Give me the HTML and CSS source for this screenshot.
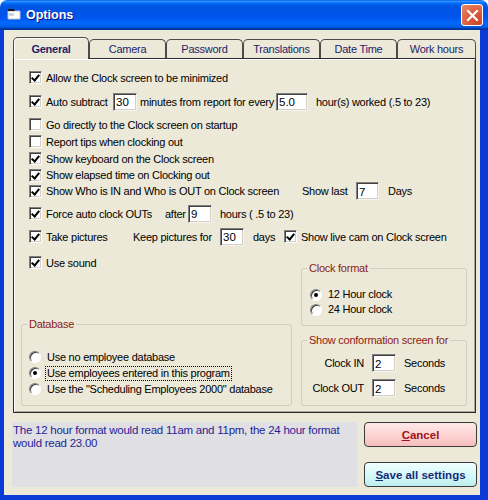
FILE: index.html
```html
<!DOCTYPE html>
<html lang="en">
<head>
    <meta charset="UTF-8">
    <title>Options</title>
    <link rel="stylesheet" href="styles.css">
</head>
<body>
    <div class="window">
        <div class="titlebar">
            <svg class="app-icon" width="14" height="12" viewBox="0 0 14 12">
                <path d="M1 3h12v8H1z" fill="#fff" stroke="#b8c4d8"/>
                <path d="M1 1h6l1 2H1z" fill="#1b1b1b"/>
                <path d="M2 5h5v3H2z" fill="#c9d3e4"/>
            </svg>
            <span class="title">Options</span>
            <div class="close-btn">
                <svg width="19" height="19" viewBox="0 0 19 19">
                    <path d="M5 5l9 9M14 5l-9 9" stroke="#fff" stroke-width="2.2" stroke-linecap="square"/>
                </svg>
            </div>
        </div>

        <div class="client">
            <div class="tabs">
                <div class="tab active">General</div>
                <div class="tab">Camera</div>
                <div class="tab">Password</div>
                <div class="tab">Translations</div>
                <div class="tab">Date Time</div>
                <div class="tab wide">Work hours</div>
            </div>

            <div class="panel">
                <div class="row">
                    <span class="check on"></span>
                    <span>Allow the Clock screen to be minimized</span>
                </div>
                <div class="row mt7">
                    <span class="check on"></span>
                    <span class="lbl lbl-auto">Auto subtract</span>
                    <input class="num" type="text" value="30">
                    <span class="lbl lbl-minutes">minutes from report for every</span>
                    <input class="num num-wide" type="text" value="5.0">
                    <span class="lbl pad8">hour(s) worked (.5 to 23)</span>
                </div>
                <div class="row mt6">
                    <span class="check"></span>
                    <span>Go directly to the Clock screen on startup</span>
                </div>
                <div class="row">
                    <span class="check"></span>
                    <span>Report tips when clocking out</span>
                </div>
                <div class="row">
                    <span class="check on"></span>
                    <span>Show keyboard on the Clock screen</span>
                </div>
                <div class="row short">
                    <span class="check on"></span>
                    <span>Show elapsed time on Clocking out</span>
                </div>
                <div class="row short">
                    <span class="check on"></span>
                    <span class="lbl lbl-who">Show Who is IN and Who is OUT on Clock screen</span>
                    <span class="lbl lbl-last">Show last</span>
                    <input class="num num-small" type="text" value="7">
                    <span class="lbl pad9">Days</span>
                </div>
                <div class="row mt6">
                    <span class="check on"></span>
                    <span class="lbl lbl-force">Force auto clock OUTs</span>
                    <span class="lbl lbl-after">after</span>
                    <input class="num" type="text" value="9">
                    <span class="lbl pad8">hours ( .5 to 23)</span>
                </div>
                <div class="row mt6">
                    <span class="check on"></span>
                    <span class="lbl lbl-take">Take pictures</span>
                    <span class="lbl lbl-keep">Keep pictures for</span>
                    <input class="num" type="text" value="30">
                    <span class="lbl lbl-days">days</span>
                    <span class="check on"></span>
                    <span>Show live cam on Clock screen</span>
                </div>

                <div class="lower">
                    <div class="lower-left">
                        <div class="row mt9">
                            <span class="check on"></span>
                            <span>Use sound</span>
                        </div>
                        <fieldset class="group database">
                            <legend>Database</legend>
                            <div class="opt">
                                <span class="radio"></span>
                                <span class="opt-text">Use no employee database</span>
                            </div>
                            <div class="opt">
                                <span class="radio on"></span>
                                <span class="opt-text focused">Use employees entered in this program</span>
                            </div>
                            <div class="opt">
                                <span class="radio"></span>
                                <span class="opt-text">Use the "Scheduling Employees 2000" database</span>
                            </div>
                        </fieldset>
                    </div>

                    <div class="lower-right">
                        <fieldset class="group clock-format">
                            <legend>Clock format</legend>
                            <div class="opt">
                                <span class="radio on"></span>
                                <span class="opt-text">12 Hour clock</span>
                            </div>
                            <div class="opt">
                                <span class="radio"></span>
                                <span class="opt-text">24 Hour clock</span>
                            </div>
                        </fieldset>
                        <fieldset class="group confirm">
                            <legend>Show conformation screen for</legend>
                            <div class="sec-row">
                                <span class="sec-label">Clock IN</span>
                                <input class="num" type="text" value="2">
                                <span class="sec-unit">Seconds</span>
                            </div>
                            <div class="sec-row">
                                <span class="sec-label">Clock OUT</span>
                                <input class="num" type="text" value="2">
                                <span class="sec-unit">Seconds</span>
                            </div>
                        </fieldset>
                    </div>
                </div>
            </div>

            <div class="footer">
                <div class="info">The 12 hour format would read 11am and 11pm, the 24 hour format would read 23.00</div>
                <div class="actions">
                    <button class="btn btn-cancel"><u>C</u>ancel</button>
                    <button class="btn btn-save"><u>S</u>ave all settings</button>
                </div>
            </div>
        </div>
    </div>
</body>
</html>
```

FILE: styles.css
```css
body {
    margin: 0;
    background: #fff;
    font-family: "Liberation Sans", Arial, sans-serif;
    font-size: 11px;
    letter-spacing: -0.25px;
    color: #000;
}
.window {
    width: 488px;
    height: 500px;
    display: flex;
    flex-direction: column;
}

/* title bar */
.titlebar {
    height: 30px;
    box-sizing: border-box;
    display: flex;
    align-items: center;
    padding: 0 5px 0 7px;
    border-radius: 7px 7px 0 0;
    background: linear-gradient(to bottom, #0058ee 0%, #3593ff 4%, #288eff 6%, #127dff 8%, #036ffc 10%, #0262ee 14%, #0057e5 20%, #0054e3 24%, #0055eb 56%, #005bf5 66%, #026afe 76%, #0062ef 86%, #0052d6 92%, #0040ab 94%, #003092 100%);
}
.app-icon {
    margin: 0 5px 2px 0;
}
.title {
    flex: 1;
    color: #fff;
    font-size: 12.5px;
    font-weight: bold;
    letter-spacing: 0;
    text-shadow: 1px 1px #0f1089;
}
.close-btn {
    width: 22px;
    height: 22px;
    box-sizing: border-box;
    display: flex;
    align-items: center;
    justify-content: center;
    border: 1px solid #fff;
    border-radius: 3px;
    background: radial-gradient(circle at 80% 85%, #cc4627 0%, #dd6445 55%, #e88b6f 100%);
}

/* client area */
.client {
    flex: 1;
    display: flex;
    flex-direction: column;
    background: #ece9d8;
    border-style: solid;
    border-color: #0a3bd6;
    border-width: 0 8px 5px 4px;
}
.tabs {
    display: flex;
    align-items: flex-end;
    height: 21px;
    margin: 7px 0 0 9px;
    position: relative;
    z-index: 1;
}
.tab {
    width: 77px;
    height: 19px;
    box-sizing: border-box;
    border: 1px solid #4b4b4b;
    border-bottom: none;
    border-radius: 5px 5px 0 0;
    text-align: center;
    line-height: 18px;
    color: #1c2468;
    background: #ece9d8;
}
.tab.active {
    width: 76px;
    height: 22px;
    margin-bottom: -1px;
    line-height: 22px;
    font-weight: bold;
    box-shadow: inset 1px 1px #fff;
}
.tab.wide {
    width: 79px;
}

.panel {
    width: 463px;
    height: 355px;
    box-sizing: border-box;
    margin-left: 9px;
    padding: 10px 8px 6px 7px;
    border: 1px solid #2b2b2b;
    box-shadow: inset 1px 1px #fff, inset -1px -1px #aca899;
    display: flex;
    flex-direction: column;
}

.row {
    display: flex;
    align-items: center;
    height: 17px;
    padding-left: 8px;
    white-space: nowrap;
}
.row.short { height: 16px; }
.mt6 { margin-top: 6px; }
.mt7 { margin-top: 7px; }
.mt9 { margin-top: 9px; }

.lbl {
    display: inline-block;
    box-sizing: border-box;
}
.lbl-auto { width: 67px; }
.lbl-minutes { width: 139px; padding-left: 3px; }
.lbl-who { width: 256px; }
.lbl-last { width: 54px; }
.lbl-force { width: 119px; }
.lbl-after { width: 23px; }
.lbl-take { width: 87px; }
.lbl-keep { width: 87px; }
.lbl-days { width: 40px; padding-left: 9px; }
.pad8 { padding-left: 8px; }
.pad9 { padding-left: 9px; }

/* sunken checkbox */
.check {
    position: relative;
    flex: none;
    width: 13px;
    height: 13px;
    box-sizing: border-box;
    margin-right: 4px;
    background: #fff;
    border: 1px solid;
    border-color: #808080 #fff #fff #808080;
    box-shadow: inset 1px 1px #404040, inset -1px -1px #d4d0c8;
}
.check.on::after {
    content: "";
    position: absolute;
    left: 3px;
    top: 1px;
    width: 3px;
    height: 6px;
    border: solid #000;
    border-width: 0 2px 2px 0;
    transform: rotate(40deg);
}

.num {
    width: 24px;
    height: 18px;
    box-sizing: border-box;
    margin: 0;
    padding: 1px 2px 0;
    font-family: inherit;
    font-size: 11.5px;
    letter-spacing: 0;
    color: #000;
    background: #fff;
    border: 1px solid;
    border-color: #808080 #f4f3ee #f4f3ee #808080;
    box-shadow: inset 1px 1px #404040, inset -1px -1px #d4d0c8;
    outline: none;
}
.num-wide { width: 32px; }
.num-small { width: 23px; }

/* lower part: groups */
.lower {
    flex: 1;
    display: flex;
    gap: 9px;
}
.lower-left {
    width: 271px;
    display: flex;
    flex-direction: column;
    justify-content: space-between;
}
.lower-right {
    width: 166px;
    display: flex;
    flex-direction: column;
}
.group {
    margin: 0;
    padding: 0 4px 0 7px;
    min-width: 0;
    border: 1px solid #d0d0bf;
    border-radius: 3px;
}
.group legend {
    padding: 0 2px;
    margin-left: -2px;
    line-height: 13px;
    color: #8c1c13;
}
.database {
    height: 88px;
    box-sizing: border-box;
    padding-top: 18px;
}
.clock-format {
    height: 64px;
    box-sizing: border-box;
    margin-top: 17px;
    padding-top: 12px;
}
.confirm {
    height: 72px;
    box-sizing: border-box;
    margin-top: 8px;
    padding-top: 6px;
}

.opt {
    display: flex;
    align-items: center;
    height: 16px;
    white-space: nowrap;
}
.clock-format .opt {
    height: 15px;
    padding-left: 1px;
}
.radio {
    flex: none;
    width: 12px;
    height: 12px;
    box-sizing: border-box;
    margin-right: 4px;
    display: flex;
    align-items: center;
    justify-content: center;
    border-radius: 50%;
    background: #fff;
    border: 1px solid;
    border-color: #808080 #fff #fff #808080;
    box-shadow: inset 1px 1px #404040;
}
.radio.on::after {
    content: "";
    width: 4px;
    height: 4px;
    border-radius: 50%;
    background: #000;
}
.opt-text {
    padding: 0 1px;
    border: 1px dotted transparent;
    line-height: 13px;
}
.opt-text.focused {
    border-color: #000;
}

.sec-row {
    display: flex;
    align-items: center;
    height: 20px;
}
.sec-row + .sec-row {
    margin-top: 5px;
}
.sec-label {
    width: 55px;
    text-align: right;
}
.sec-row .num {
    margin-left: 8px;
}
.sec-unit {
    margin-left: 8px;
}

/* footer */
.footer {
    display: flex;
    margin: 9px 0 0 8px;
    gap: 7px;
}
.info {
    width: 345px;
    height: 65px;
    box-sizing: border-box;
    padding: 2px 1px;
    background: #e0dfe3;
    color: #1f1f95;
    font-size: 11.5px;
    line-height: 13px;
}
.actions {
    display: flex;
    flex-direction: column;
    gap: 15px;
}
.btn {
    width: 113px;
    height: 25px;
    padding: 0;
    font-family: inherit;
    font-size: 11.5px;
    font-weight: bold;
    letter-spacing: 0;
    border: 1px solid #3c3c3c;
    border-radius: 4px;
}
.btn-cancel {
    color: #9c1414;
    background: linear-gradient(to bottom, #ffe8e8, #fdd0d0 60%, #f4bcbc);
}
.btn-save {
    color: #1a2a78;
    background: linear-gradient(to bottom, #eefefe, #d2f8f8 60%, #bdeeee);
}
```
